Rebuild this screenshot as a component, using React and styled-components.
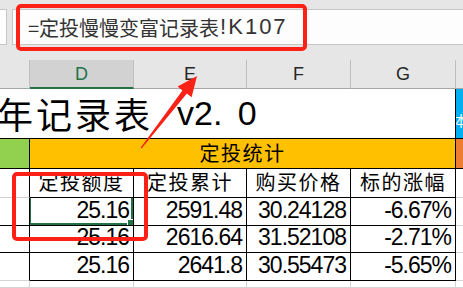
import React from "react";
import styled, { createGlobalStyle } from "styled-components";

const GlobalStyle = createGlobalStyle`
  html, body {
    margin: 0;
    padding: 0;
    background: #ffffff;
    overflow: hidden;
  }
  body {
    font-family: "Liberation Sans", "Noto Sans CJK SC", sans-serif;
  }
`;

const Sheet = styled.div`
  position: relative;
  width: 463px;
  height: 288px;
  overflow: hidden;
  background: #ffffff;
`;

// formula bar
const FormulaBar = styled.div`
  height: 60px;
  box-sizing: border-box;
  padding-top: 9px;
  background: #e6e6e6;
  display: flex;
  align-items: flex-start;
  gap: 5px;
`;

const NameBox = styled.div`
  width: 7px;
  height: 36px;
  box-sizing: border-box;
  background: #fdfdfd;
  border: 1px solid #c6c6c6;
  border-left: none;
`;

const FormulaInput = styled.div`
  flex: 1;
  height: 36px;
  box-sizing: border-box;
  background: #fdfdfd;
  border: 1px solid #c6c6c6;
  border-right: none;
  display: flex;
  align-items: center;
  padding-left: 15px;
  font-family: "Noto Sans CJK SC", "Liberation Sans", sans-serif;
  font-size: 20px;
  color: #333333;
  white-space: nowrap;
`;

const RefPart = styled.span`
  font-family: "Liberation Sans", sans-serif;
  font-size: 22px;
  letter-spacing: 2px;
  margin-left: 1px;
`;

// grid
const Grid = styled.div`
  display: grid;
  grid-template-columns: 30px 104px 113px 104px 105px 1fr;
  grid-template-rows: 29px 50px 30px 29px 28px 27px 28px 1fr;
  height: 228px;
`;

const ColHead = styled.div`
  box-sizing: border-box;
  background: ${(p) => (p.$active ? "#d2d2d2" : "#e6e6e6")};
  border-right: 1px solid #bfbfbf;
  border-bottom: ${(p) => (p.$active ? "2px solid #217346" : "1px solid #a6a6a6")};
  color: ${(p) => (p.$active ? "#217346" : "#262626")};
  font-size: 18px;
  display: flex;
  align-items: center;
  justify-content: center;
  padding-top: 1px;
`;

const Cell = styled.div`
  position: relative;
  box-sizing: border-box;
  min-width: 0;
  overflow: hidden;
  white-space: nowrap;
  background: ${(p) => p.$bg || "#ffffff"};
  border-right: 1px solid ${(p) => p.$r || "#d4d4d4"};
  border-bottom: 1px solid ${(p) => p.$b || "#d4d4d4"};
  grid-column: ${(p) => p.$span || "auto"};
  display: flex;
  align-items: flex-end;
  justify-content: ${(p) => p.$justify || "flex-start"};
  padding: 0 4px 3px;
  color: #000000;
`;

const TitleCell = styled(Cell)`
  padding-left: 0;
`;

const Title = styled.span`
  font-family: "Noto Sans CJK SC", sans-serif;
  font-size: 36px;
  letter-spacing: 3px;
  line-height: 44px;
  margin-left: -3px;
`;

const Version = styled.span`
  font-family: "Liberation Sans", sans-serif;
  font-size: 34px;
  line-height: 44px;
  margin-left: 24px;
  word-spacing: 6px;
`;

const TagCell = styled(Cell)`
  padding: 0;
`;

const SideTag = styled.span`
  color: #ffffff;
  font-family: "Noto Sans CJK SC", sans-serif;
  font-size: 14px;
  margin-left: -2px;
  padding-bottom: 8px;
`;

const Label = styled.span`
  font-family: "Noto Sans CJK SC", sans-serif;
  font-size: 20px;
  letter-spacing: 1.5px;
  line-height: 24px;
`;

const Num = styled.span`
  font-family: "Liberation Sans", sans-serif;
  font-size: 23px;
  letter-spacing: -1px;
  line-height: 24px;
`;

// selection on the active cell
const Selection = styled.div`
  position: absolute;
  left: -1px;
  top: -1px;
  right: 0;
  bottom: 0;
  border: 2px solid #217346;
  border-top: none;
  pointer-events: none;
`;

const FillHandle = styled.div`
  position: absolute;
  right: -3px;
  bottom: -3px;
  width: 5px;
  height: 5px;
  background: #217346;
  border: 1px solid #ffffff;
`;

// annotations on top
const Mark = styled.div`
  position: absolute;
  left: ${(p) => p.$x}px;
  top: ${(p) => p.$y}px;
  width: ${(p) => p.$w}px;
  height: ${(p) => p.$h}px;
  box-sizing: border-box;
  border: 4px solid #fb2117;
  border-radius: 5px;
  pointer-events: none;
`;

const ArrowLayer = styled.svg`
  position: absolute;
  left: 0;
  top: 0;
  pointer-events: none;
`;

const B = "#000000";
const G = "#d4d4d4";

const rows = [
  ["25.16", "2591.48", "30.24128", "-6.67%"],
  ["25.16", "2616.64", "31.52108", "-2.71%"],
  ["25.16", "2641.8", "30.55473", "-5.65%"],
];

const labels = ["定投额度", "定投累计", "购买价格", "标的涨幅"];

export default function App() {
  return (
    <>
      <GlobalStyle />
      <Sheet>
        <FormulaBar>
          <NameBox />
          <FormulaInput>
            =定投慢慢变富记录表<RefPart>!K107</RefPart>
          </FormulaInput>
        </FormulaBar>

        <Grid>
          {/* column letters */}
          <ColHead />
          <ColHead $active>D</ColHead>
          <ColHead>E</ColHead>
          <ColHead>F</ColHead>
          <ColHead>G</ColHead>
          <ColHead />

          {/* title row */}
          <TitleCell $span="1 / 6" $r={B} $b={B}>
            <Title>年记录表</Title>
            <Version>v2. 0</Version>
          </TitleCell>
          <TagCell $bg="#00b0f0" $r="#00b0f0" $b={B}>
            <SideTag>本</SideTag>
          </TagCell>

          {/* section row */}
          <Cell $bg="#92d050" $r={B} $b={B} />
          <Cell $bg="#ffc000" $span="2 / 6" $r={B} $b={B} $justify="center">
            <Label>定投统计</Label>
          </Cell>
          <Cell $bg="#ed7d31" $r="#ed7d31" $b={B} />

          {/* labels */}
          <Cell $r={B} $b={G} />
          {labels.map((l) => (
            <Cell key={l} $r={B} $b={B} $justify="center">
              <Label>{l}</Label>
            </Cell>
          ))}
          <Cell $b={G} />

          {/* data */}
          {rows.map((r, i) => (
            <React.Fragment key={i}>
              <Cell $r={B} $b={i < 2 ? B : G} />
              {r.map((v, j) => (
                <Cell key={j} $r={B} $b={B} $justify="flex-end">
                  <Num>{v}</Num>
                  {i === 0 && j === 0 && (
                    <Selection>
                      <FillHandle />
                    </Selection>
                  )}
                </Cell>
              ))}
              <Cell $b={G} />
            </React.Fragment>
          ))}

          {/* tail row */}
          <Cell />
          <Cell />
          <Cell />
          <Cell />
          <Cell />
          <Cell />
        </Grid>

        <Mark $x={16} $y={4} $w={291} $h={47} />
        <Mark $x={12} $y={172} $w={136} $h={69} />

        <ArrowLayer width="463" height="288" viewBox="0 0 463 288">
          <polygon
            fill="#fb2117"
            points="140.6,147.7 182.4,90.5 177.6,86.6 197,76 191.6,97.3 186.9,93.5 141.6,148.4"
          />
        </ArrowLayer>
      </Sheet>
    </>
  );
}
